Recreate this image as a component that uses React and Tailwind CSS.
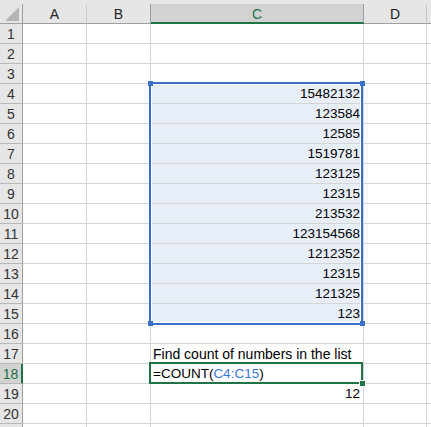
const values = {
  4: '15482132',
  5: '123584',
  6: '12585',
  7: '1519781',
  8: '123125',
  9: '12315',
  10: '213532',
  11: '123154568',
  12: '1212352',
  13: '12315',
  14: '121325',
  15: '123',
};

const rows = Array.from({ length: 21 }, (_, i) => i + 1);
const font = { fontFamily: '"Liberation Sans", Arial, sans-serif' };

const cellBase = 'h-[20px] border-r border-b border-[#d4d4d4]';

const CCell = ({ r }) => {
  const inRange = r >= 4 && r <= 15;
  let content = null;
  if (inRange) {
    content = <div className="text-right pr-[3px] pt-[1px] text-[13.5px] text-black">{values[r]}</div>;
  } else if (r === 17) {
    content = <div className="pl-[2px] pt-[1px] whitespace-nowrap text-black">Find count of numbers in the list</div>;
  } else if (r === 18) {
    content = (
      <div className="pl-[2px] pt-[1px] whitespace-nowrap text-[13.5px] text-black">
        =COUNT(<span className="text-[#3c78d8]">C4:C15</span>)
      </div>
    );
  } else if (r === 19) {
    content = <div className="text-right pr-[3px] pt-[1px] text-[13.5px] text-black">12</div>;
  }
  return <div className={`${cellBase} ${inRange ? 'bg-[#e8eef8]' : 'bg-white'}`}>{content}</div>;
};

const App = () => {
  return (
    <div
      className="relative w-[431px] h-[427px] overflow-hidden bg-white text-[14px] leading-[18px]"
      style={font}
    >
      <div className="h-[4px] bg-[#e6e6e6]" />
      <div className="grid grid-cols-[23px_64px_64px_213px_63px_1fr]">
        {/* header */}
        <div className="relative h-[20px] bg-[#e6e6e6] border-r border-b border-[#9f9f9f]">
          <svg className="absolute left-[5px] top-[3px]" width="14" height="14" viewBox="0 0 14 14">
            <polygon points="14,0 14,14 0,14" fill="#b5b5b5" />
          </svg>
        </div>
        <div className="h-[20px] bg-[#e6e6e6] border-r border-b border-r-[#c8c8c8] border-b-[#9f9f9f] text-center text-[#222] pt-[1px]">A</div>
        <div className="h-[20px] bg-[#e6e6e6] border-r border-b border-r-[#9f9f9f] border-b-[#9f9f9f] text-center text-[#222] pt-[1px]">B</div>
        <div className="h-[20px] bg-[#d2d2d2] border-r border-b-2 border-r-[#9f9f9f] border-b-[#217346] text-center text-[#217346] pt-[1px]">C</div>
        <div className="h-[20px] bg-[#e6e6e6] border-r border-b border-r-[#c8c8c8] border-b-[#9f9f9f] text-center text-[#222] pt-[1px]">D</div>
        <div className="h-[20px] bg-[#e6e6e6] border-b border-[#9f9f9f]" />

        {rows.map((r) => (
          <div key={r} className="contents">
            <div
              className={`h-[20px] border-b text-center pt-[1px] ${
                r === 18
                  ? 'bg-[#d2d2d2] border-r-2 border-r-[#217346] border-b-[#b8b8b8] text-[#217346]'
                  : 'bg-[#e6e6e6] border-r border-r-[#9f9f9f] border-b-[#b8b8b8] text-[#333]'
              }`}
            >
              {r <= 20 ? r : ''}
            </div>
            <div className={cellBase} />
            <div className={cellBase} />
            <CCell r={r} />
            <div className={cellBase} />
            <div className="h-[20px] border-b border-[#d4d4d4]" />
          </div>
        ))}
      </div>

      {/* referenced range C4:C15 */}
      <div className="absolute left-[149px] top-[82px] w-[214px] h-[243px] border-2 border-[#3a6fc8] pointer-events-none">
        <div className="w-full h-full border border-white" />
      </div>
      <div className="absolute left-[148px] top-[81px] w-[5px] h-[5px] bg-[#3a6fc8]" />
      <div className="absolute left-[360px] top-[81px] w-[5px] h-[5px] bg-[#3a6fc8]" />
      <div className="absolute left-[148px] top-[321px] w-[5px] h-[5px] bg-[#3a6fc8]" />
      <div className="absolute left-[360px] top-[321px] w-[5px] h-[5px] bg-[#3a6fc8]" />

      {/* active cell C18 */}
      <div className="absolute left-[149px] top-[362px] w-[214px] h-[22px] border-2 border-[#217346]" />
      <div className="absolute left-[360px] top-[381px] w-[5px] h-[5px] bg-[#217346] outline outline-1 outline-white" />
    </div>
  );
};

export default App;
